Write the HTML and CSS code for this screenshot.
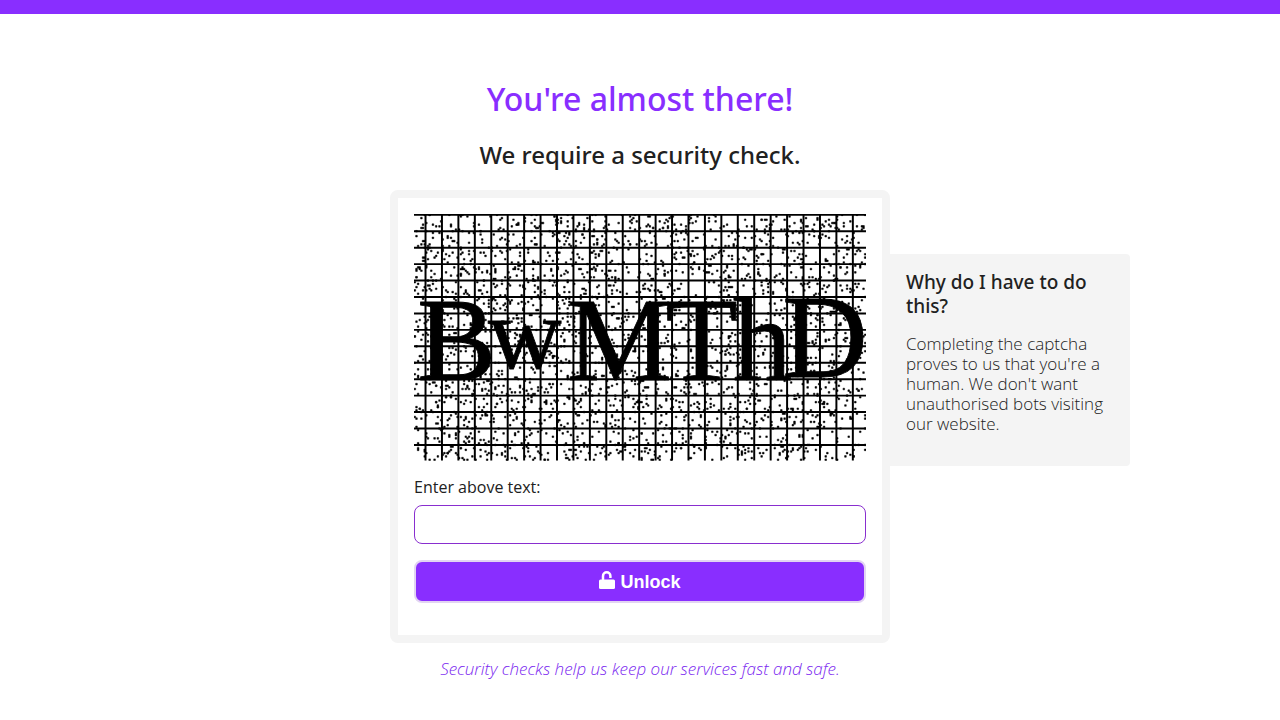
FILE: index.html
```
<!DOCTYPE html>
<html lang="en">
<head>
  <meta charset="UTF-8" />
  <meta name="viewport" content="width=device-width,initial-scale=1.0" />
  <title>Security check</title>
  <link rel="stylesheet" href="styles.css">
</head>
<body>

  <header class="topbar"></header>

  <main>
    <h1>You're almost there!</h1>
    <h2>We require a security check.</h2>

    <div class="check">
      <form class="card">
        <svg class="captcha" viewBox="0 0 275 150" role="img" aria-label="Captcha">
          <path class="grid" id="grid" />
          <path id="noise" />
          <g class="letters">
            <text x="2" y="101">B</text>
            <text x="45" y="94" font-size="62">w</text>
            <text x="93" y="101">M</text>
            <text x="153" y="101">T</text>
            <text x="194" y="101">h</text>
            <text x="224" y="99">D</text>
          </g>
        </svg>
        <label for="answer">Enter above text:</label>
        <input type="text" id="answer" name="answer" autocomplete="off">
        <button type="submit">
          <svg class="lock" viewBox="0 0 16 18" aria-hidden="true">
            <path class="shackle" d="M4 10V5a3.700 3.700 0 0 1 7.400 0V7" />
            <rect y="8.500" width="16" height="9.500" rx="1.500" />
          </svg>
          Unlock
        </button>
      </form>

      <aside class="why">
        <h3>Why do I have to do this?</h3>
        <p>Completing the captcha proves to us that you're a human. We don't want unauthorised bots visiting our website.</p>
      </aside>
    </div>

    <p class="note">Security checks help us keep our services fast and safe.</p>
  </main>

  <script src="captcha.js"></script>
</body>
</html>
```
FILE: styles.css
```
* { margin: 0; padding: 0; box-sizing: border-box; }
body {
  font-family: "Open Sans", "Noto Sans", sans-serif;
  font-size: 16px;
  line-height: 20px;
  background: #fff;
  color: #212121;
}
.topbar { height: 14px; background: #892eff; }
main { padding: 60px 0 32px; text-align: center; }
h1, h2, h3 { font-family: "Noto Sans", sans-serif; font-weight: 500; }
h1 {
  font-size: 32px;
  line-height: 50px;
  color: #892eff;
}
h2 {
  font-size: 24px;
  line-height: 34px;
  margin: 14px 0 18px;
}
.check {
  display: grid;
  grid-template-columns: 1fr minmax(0, 500px) 1fr;
  align-items: start;
  text-align: left;
}
.card {
  grid-column: 2;
  padding: 16px 16px 32px;
  border: 8px solid #f4f4f4;
  border-radius: 8px;
}
.captcha { display: block; width: 100%; }
.captcha .grid { stroke: #000; stroke-width: 1.2; }
#noise { stroke: #000; stroke-width: 0.3; }
.letters {
  font-family: "Liberation Serif", serif;
  font-size: 72px;
  stroke: #000;
  stroke-width: 0.5;
}
label { display: block; margin: 16px 0 8px; }
input {
  display: block;
  width: 100%;
  height: 39px;
  padding: 0 12px;
  border: 1px solid #892ecf;
  border-radius: 8px;
  background: #fff;
  font: inherit;
}
button {
  display: flex;
  justify-content: center;
  align-items: center;
  gap: 5px;
  width: 100%;
  height: 43px;
  margin-top: 16px;
  padding-top: 2px;
  border: 2px solid #e2d4f2;
  border-radius: 8px;
  background: #892eff;
  color: #fff;
  font: bold 18px "Liberation Sans", Arial, sans-serif;
  cursor: pointer;
}
.lock { width: 16px; height: 18px; margin-bottom: 5px; fill: #fff; }
.shackle { fill: none; stroke: #fff; stroke-width: 2.5; }
.why {
  max-width: 240px;
  margin-top: 64px;
  padding: 16px 16px 32px;
  background: #f4f4f4;
  border-radius: 0 4px 4px 0;
}
.why h3 { font-size: 19px; line-height: 24px; margin-bottom: 16px; }
.why p, .note { font-size: 17px; font-weight: 300; }
.note {
  margin-top: 16px;
  font-style: italic;
  color: #7a1ff0;
}
@media (max-width: 900px) {
  .check { grid-template-columns: 1fr; padding: 0 16px; }
  .card { grid-column: 1; }
  .why { max-width: none; margin-top: 16px; }
}
```
FILE: captcha.js
```
const W = 275, H = 150;

let grid = '';
for (let x = 7; x < W; x += 10) grid += `M${x} 0V${H}`;
for (let y = 0.5; y < H; y += 10) grid += `M0 ${y}H${W}`;
document.getElementById('grid').setAttribute('d', grid);

// fixed seed so the speckles stay put between loads
let seed = 4711;
function rand(n) {
  seed = (seed * 1103515245 + 12345) % 2147483648;
  return Math.floor(seed / 2147483648 * n);
}

let noise = '';
for (let i = 0; i < 2900; i++) noise += `M${rand(W)} ${rand(H)}h1v1h-1z`;
document.getElementById('noise').setAttribute('d', noise);
```
